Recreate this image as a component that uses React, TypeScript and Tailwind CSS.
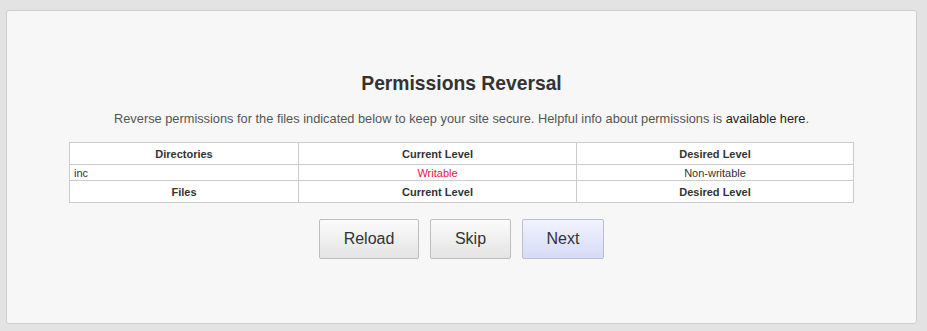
export default function App() {
  const cell = "border border-[#cccccc] px-1 py-0";
  return (
    <div className="min-h-[331px] w-full bg-[#e3e3e3] pl-[6px] pr-[10px] pt-[10px] pb-[7px] font-['Liberation_Sans',Arial,sans-serif]">
      <div className="h-[314px] rounded-[3px] border border-[#cfcfcf] bg-[#f7f7f7] pt-[58px]">
        <h2 className="text-center text-[19.3px] font-bold leading-[30px] text-[#333333]">Permissions Reversal</h2>
        <p className="mt-[12px] text-center text-[12.8px] leading-[16px] text-[#555555]">
          Reverse permissions for the files indicated below to keep your site secure. Helpful info about permissions is{" "}
          <a className="text-[#222222]">available here</a>.
        </p>
        <table className="mx-auto mt-[15px] w-[784px] table-fixed border-collapse bg-white text-[11px] leading-[14px] text-[#333333]">
          <colgroup>
            <col className="w-[229px]" />
            <col className="w-[278px]" />
            <col className="w-[277px]" />
          </colgroup>
          <tbody>
            <tr className="h-[22px] font-bold">
              <td className={`${cell} text-center`}>Directories</td>
              <td className={`${cell} text-center`}>Current Level</td>
              <td className={`${cell} text-center`}>Desired Level</td>
            </tr>
            <tr className="h-[16px]">
              <td className={`${cell} text-left`}>inc</td>
              <td className={`${cell} text-center text-[#ee1144]`}>Writable</td>
              <td className={`${cell} text-center`}>Non-writable</td>
            </tr>
            <tr className="h-[22px] font-bold">
              <td className={`${cell} text-center`}>Files</td>
              <td className={`${cell} text-center`}>Current Level</td>
              <td className={`${cell} text-center`}>Desired Level</td>
            </tr>
          </tbody>
        </table>
        <div className="mt-[16px] flex justify-center gap-[11px]">
          <button className="h-[40px] w-[100px] rounded-[2px] border border-[#bdbdbd] bg-gradient-to-b from-[#fbfbfb] to-[#e4e4e4] text-[16px] text-[#333333]">
            Reload
          </button>
          <button className="h-[40px] w-[81px] rounded-[2px] border border-[#bdbdbd] bg-gradient-to-b from-[#fbfbfb] to-[#e4e4e4] text-[16px] text-[#333333]">
            Skip
          </button>
          <button className="h-[40px] w-[82px] rounded-[2px] border border-[#b9bdd6] bg-gradient-to-b from-[#f2f3ff] to-[#d6dbf6] text-[16px] text-[#333333]">
            Next
          </button>
        </div>
      </div>
    </div>
  );
}
